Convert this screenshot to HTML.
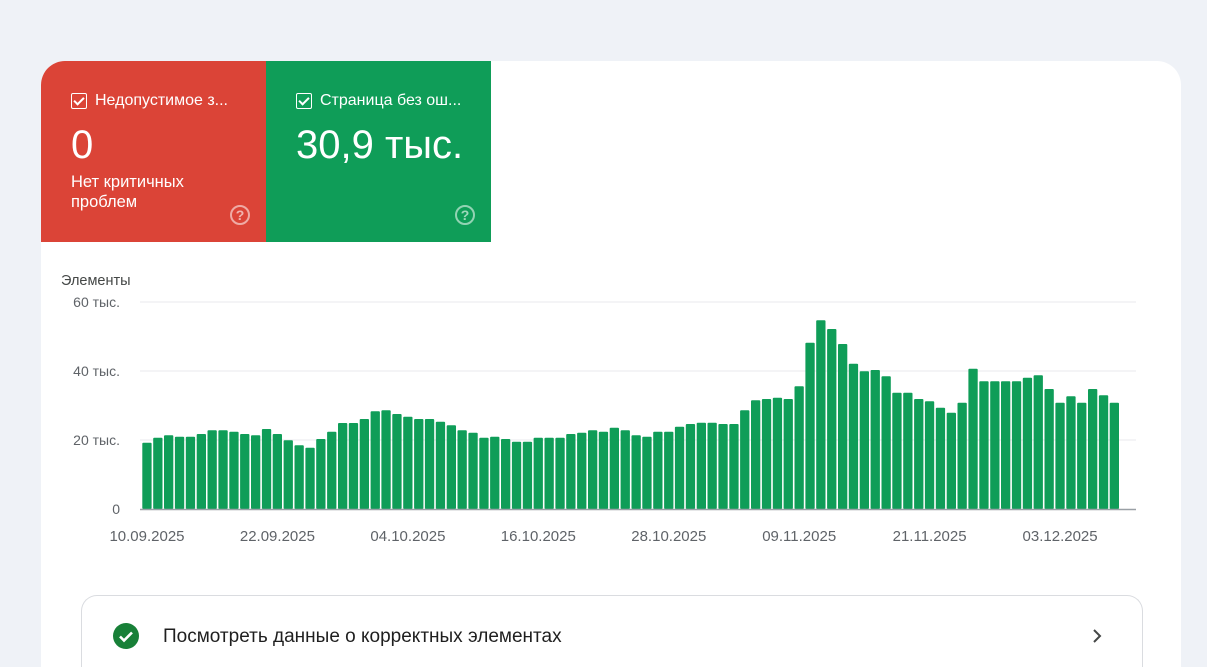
<!DOCTYPE html>
<html><head><meta charset="utf-8"><style>
*{margin:0;padding:0;box-sizing:border-box}
html,body{width:1207px;height:667px;overflow:hidden}
body{background:#eff2f7;font-family:"Liberation Sans",Arial,sans-serif;position:relative}
.card{position:absolute;left:41px;top:61px;width:1140px;height:606px;background:#fff;border-radius:24px 24px 0 0}
.tile{position:absolute;top:61px;height:181px;width:225px;color:#fff}
.red{left:41px;background:#db4437;border-top-left-radius:24px}
.green{left:266px;background:#0f9d58}
.hd{position:absolute;left:30px;top:31px;font-size:16px;display:flex;align-items:center;white-space:nowrap}
.cb{width:16px;height:16px;border:1.5px solid #fff;border-radius:2px;margin-right:8px;position:relative;flex:none}
.cb:after{content:"";position:absolute;left:4px;top:0.5px;width:4px;height:8px;border:solid #fff;border-width:0 2px 2px 0;transform:rotate(45deg)}
.big{position:absolute;left:30px;top:62px;font-size:40px;line-height:44px;white-space:nowrap}
.sub{position:absolute;left:30px;top:111px;font-size:16.5px;line-height:20px}
.q{position:absolute;left:189px;top:144px;width:20px;height:20px;border:2px solid rgba(255,255,255,.55);border-radius:50%;color:rgba(255,255,255,.6);font-size:14px;font-weight:bold;text-align:center;line-height:16px}
.lbl{position:absolute;font-size:14px;color:#5f6368}
.box{position:absolute;left:81px;top:595px;width:1062px;height:72px;border:1px solid #dadce0;border-bottom:none;border-radius:16px 16px 0 0}
</style></head><body>
<div class="card"></div>
<div class="tile red"><div class="hd"><span class="cb"></span>Недопустимое з...</div><div class="big">0</div><div class="sub">Нет критичных<br>проблем</div><div class="q">?</div></div>
<div class="tile green"><div class="hd"><span class="cb"></span>Страница без ош...</div><div class="big">30,9 тыс.</div><div class="q">?</div></div>
<div class="lbl" style="left:61px;top:273px;color:#444746;font-size:14.5px">Элементы</div>
<div class="lbl" style="left:50px;width:70px;text-align:right;top:294px">60 тыс.</div>
<div class="lbl" style="left:50px;width:70px;text-align:right;top:363px">40 тыс.</div>
<div class="lbl" style="left:50px;width:70px;text-align:right;top:432px">20 тыс.</div>
<div class="lbl" style="left:50px;width:70px;text-align:right;top:501px">0</div>
<svg id="ch" style="position:absolute;left:0;top:0" width="1207" height="667"></svg>
<div class="box"></div>
<svg style="position:absolute;left:113px;top:623px" width="26" height="26"><circle cx="13" cy="13" r="13" fill="#188038"/><path d="M7 13.5l4 4 8-8" stroke="#fff" stroke-width="2.6" fill="none"/></svg>
<div style="position:absolute;left:163px;top:626px;font-size:19px;color:#1f1f1f;white-space:nowrap">Посмотреть данные о корректных элементах</div>
<svg style="position:absolute;left:1089px;top:628px" width="16" height="16"><path d="M5 2l6 6-6 6" stroke="#444746" stroke-width="2" fill="none"/></svg>
<script>
var z1=[398,383,376,380,380,372,361,361,365,372,376,357,372,391,406,413,387,365,339,339,327,304,301,312,320,327,327,335,346,361,368,383,380,387,395,395,383,383,383,372,368,361,365,353];
var z2=[361,376,380,365,365,350,342,338,338,342,342,301,271,267,263,267,229,98,31,57,102,161,184,180,199,248,248,267,274,293,308,278,176,214,214,214,214,203,196,237,278,259,278,237,256,278];
var tops=z1.map(function(v){return 310+v/3}).concat(z2.map(function(v){return 310+v/3}));
var s='';
[302,371,440].forEach(function(y){s+='<line x1="140" x2="1136" y1="'+y+'" y2="'+y+'" stroke="#e8eaed"/>';});
tops.forEach(function(t,i){var x=142.3+i*10.87;s+='<rect x="'+x.toFixed(1)+'" y="'+t.toFixed(1)+'" width="9.3" height="'+(509-t).toFixed(1)+'" rx="1" fill="#0f9d58"/>';});
s+='<line x1="140" x2="1136" y1="509.5" y2="509.5" stroke="#9aa0a6" stroke-width="1.5"/>';
var d=['10.09.2025','22.09.2025','04.10.2025','16.10.2025','28.10.2025','09.11.2025','21.11.2025','03.12.2025'];
d.forEach(function(t,i){var x=147+i*12*10.87;s+='<text x="'+x.toFixed(1)+'" y="541" text-anchor="middle" font-size="15" fill="#5f6368" font-family="Liberation Sans,Arial,sans-serif">'+t+'</text>';});
document.getElementById('ch').innerHTML=s;
</script>
</body></html>
